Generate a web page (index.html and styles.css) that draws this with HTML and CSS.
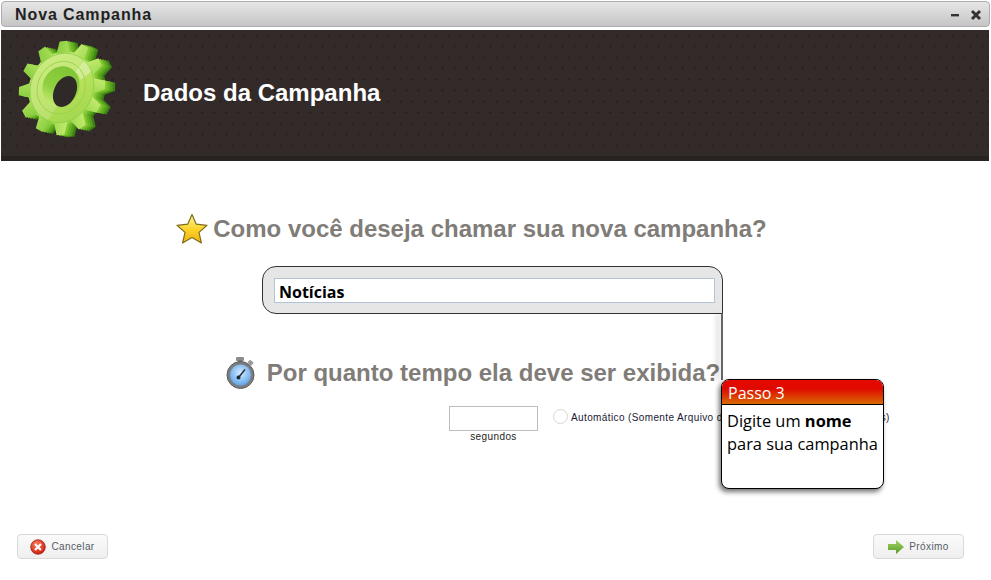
FILE: index.html
```html
<!DOCTYPE html>
<html lang="pt">
<head>
<meta charset="utf-8">
<title>Nova Campanha</title>
<link rel="stylesheet" href="styles.css">
</head>
<body>
<div class="window">
  <div class="titlebar">
    <span class="title">Nova Campanha</span>
    <div class="win-actions">
      <svg class="win-icon" width="12" height="12" viewBox="0 0 12 12"><rect x="2" y="5" width="8" height="2.4" fill="#333"/></svg>
      <svg class="win-icon" width="12" height="12" viewBox="0 0 12 12"><path d="M2 2 L10 10 M10 2 L2 10" stroke="#333" stroke-width="3"/></svg>
    </div>
  </div>
  <header class="banner">
    <svg class="gear" width="100" height="100" viewBox="0 0 100 100">
      <defs>
        <linearGradient id="gf" x1="0" y1="0" x2="1" y2="1">
          <stop offset="0" stop-color="#c4ea6c"/><stop offset=".55" stop-color="#b6e05a"/><stop offset="1" stop-color="#9ad44a"/>
        </linearGradient>
        <linearGradient id="gt" x1="0" y1="0" x2="1" y2="1">
          <stop offset="0" stop-color="#c6ec72"/><stop offset="1" stop-color="#86cc3c"/>
        </linearGradient>
        <linearGradient id="gh" x1="0" y1="0" x2="0" y2="1">
          <stop offset="0" stop-color="#7fc535"/><stop offset=".6" stop-color="#8fd040"/><stop offset="1" stop-color="#c2e96e"/>
        </linearGradient>
        <clipPath id="rim"><circle r="37"/></clipPath>
        <g id="tooth"><polygon points="-8,-36 -4.5,-50 4.5,-50 8,-36 8,36 4.5,50 -4.5,50 -8,36"/></g>
        <g id="cog">
          <circle r="39"/>
          <use href="#tooth" transform="rotate(4)"/>
          <use href="#tooth" transform="rotate(34)"/>
          <use href="#tooth" transform="rotate(64)"/>
          <use href="#tooth" transform="rotate(94)"/>
          <use href="#tooth" transform="rotate(124)"/>
          <use href="#tooth" transform="rotate(154)"/>
        </g>
      </defs>
      <g transform="translate(45 50)">
        <use href="#cog" fill="#3c8510" transform="translate(10 2) rotate(25) scale(.84 .96)"/>
        <use href="#cog" fill="#55a01c" transform="translate(7.5 1.5) rotate(25) scale(.84 .96)"/>
        <use href="#cog" fill="#6cb426" transform="translate(5 1) rotate(25) scale(.84 .96)"/>
        <use href="#cog" fill="#82c832" transform="translate(2.5 .5) rotate(25) scale(.84 .96)"/>
        <g transform="rotate(25) scale(.84 .96)">
          <use href="#cog" fill="url(#gt)"/>
          <circle r="37" fill="url(#gf)" stroke="#8fcf45" stroke-width=".9"/>
          <polygon points="14,-52 1,36 -45,36 -45,-52" fill="#fff" opacity=".16" clip-path="url(#rim)"/>
          <polygon points="12,-40 27,-34 16,-16 7,-22" fill="#fff" opacity=".35" clip-path="url(#rim)"/>
          <circle cx="-1" r="28" fill="none" stroke="#97d34c" stroke-width=".9"/>
          <circle cx="-2" cy="-1" r="21.5" fill="url(#gh)"/>
          <ellipse cx="5" cy="2" rx="13" ry="17" fill="#2f2927"/>
        </g>
      </g>
    </svg>
    <h1 class="banner-title">Dados da Campanha</h1>
  </header>
  <main class="content">
    <h2 class="question">
      <svg class="q-icon" width="34" height="34" viewBox="0 0 34 34">
        <defs><linearGradient id="st" x1="0" y1="0" x2="0" y2="1"><stop offset="0" stop-color="#fdf3a8"/><stop offset=".5" stop-color="#fbd52c"/><stop offset="1" stop-color="#f3b00c"/></linearGradient></defs>
        <polygon points="17,2.5 21.3,12.2 32,13.3 24,20.4 26.4,31 17,25.5 7.6,31 10,20.4 2,13.3 12.7,12.2" fill="url(#st)" stroke="#7d6d1c" stroke-width="1.2" stroke-linejoin="round"/>
      </svg>
      <span>Como você deseja chamar sua nova campanha?</span>
    </h2>
    <div class="name-box">
      <div class="name-input">Notícias</div>
      <span class="name-line"></span>
    </div>
    <h2 class="question question-time">
      <svg class="q-icon" width="32" height="34" viewBox="0 0 32 34">
        <defs><radialGradient id="wf" cx=".5" cy=".4" r=".6"><stop offset="0" stop-color="#d8ecff"/><stop offset="1" stop-color="#5ea6ea"/></radialGradient></defs>
        <rect x="11" y="1" width="8" height="4" rx="1" fill="#8d8d8d"/>
        <rect x="13" y="4" width="4" height="4" fill="#777"/>
        <rect x="23" y="5" width="5" height="4" rx="1" fill="#9a9a9a" transform="rotate(40 26 7)"/>
        <circle cx="15.5" cy="19" r="13.5" fill="#7b7d80" stroke="#5c5c5c" stroke-width="1"/>
        <circle cx="15.5" cy="19" r="10.5" fill="url(#wf)"/>
        <path d="M13.5 21.5 L20 13.5" stroke="#1d2a38" stroke-width="1.5"/>
        <circle cx="13.5" cy="21.5" r="2" fill="#1d2a38"/>
      </svg>
      <span>Por quanto tempo ela deve ser exibida?</span>
    </h2>
    <div class="duration">
      <div class="seconds">
        <div class="seconds-input"></div>
        <span class="seconds-label">segundos</span>
      </div>
      <div class="auto">
        <span class="radio"></span>
        <span class="auto-label">Automático (Somente Arquivo de Vídeo, Flash, Animações longas)</span>
      </div>
    </div>
    <aside class="tip">
      <div class="tip-head">Passo 3</div>
      <div class="tip-body">Digite um <b>nome</b><br>para sua campanha</div>
    </aside>
  </main>
  <footer class="actions">
    <button class="btn" type="button">
      <svg width="16" height="16" viewBox="0 0 16 16">
        <defs><radialGradient id="rb" cx=".4" cy=".3" r=".8"><stop offset="0" stop-color="#ff7a55"/><stop offset="1" stop-color="#c81408"/></radialGradient></defs>
        <circle cx="8" cy="8" r="7.3" fill="url(#rb)" stroke="#8e1a10" stroke-width=".7"/>
        <path d="M5 5 L11 11 M11 5 L5 11" stroke="#fff" stroke-width="2.2"/>
      </svg>
      <span>Cancelar</span>
    </button>
    <button class="btn btn-next" type="button">
      <svg width="16" height="14" viewBox="0 0 16 14">
        <defs><linearGradient id="ga" x1="0" y1="0" x2="0" y2="1"><stop offset="0" stop-color="#a4d468"/><stop offset="1" stop-color="#5b9a26"/></linearGradient></defs>
        <polygon points="0,4 8,4 8,0 16,7 8,14 8,10 0,10" fill="url(#ga)"/>
      </svg>
      <span>Próximo</span>
    </button>
  </footer>
</div>
</body>
</html>
```
FILE: styles.css
```css
* { box-sizing: border-box; }
html, body { margin: 0; height: 100%; background: #fff; overflow: hidden; }
.window {
  position: relative;
  display: flex;
  flex-direction: column;
  height: 580px;
  width: 991px;
  padding: 1px 1px 0 1px;
  font-family: "Liberation Sans", Arial, sans-serif;
}
.titlebar {
  display: flex;
  align-items: center;
  justify-content: space-between;
  height: 26px;
  padding: 2px 7px 0 13px;
  border: 1px solid #adadad;
  border-radius: 4px;
  background: linear-gradient(#e6e6e6, #c5c5c5);
}
.title {
  font-size: 16px;
  font-weight: bold;
  letter-spacing: .9px;
  color: #222;
}
.win-actions { display: flex; gap: 9px; }
.win-icon { display: block; }
.banner {
  display: flex;
  align-items: center;
  height: 131px;
  margin: 3px 1px 0 0;
  padding: 0 0 10px 16px;
  background-color: #332b2a;
  background-image: url("data:image/svg+xml,%3Csvg xmlns='http://www.w3.org/2000/svg' width='12' height='22'%3E%3Cpath fill='%23292221' d='M3 4h1v1h1v1h-1v1h-1v-1h-1v-1h1zM9 15h1v1h1v1h-1v1h-1v-1h-1v-1h1z'/%3E%3C/svg%3E");
  background-size: 12px 22px;
  border-bottom: 5px solid #282321;
}
.gear { display: block; flex: none; }
.banner-title {
  margin: 10px 0 0 26px;
  font-size: 24px;
  font-weight: bold;
  color: #fff;
}
.content {
  position: relative;
  flex: 1;
  display: flex;
  flex-direction: column;
  align-items: center;
  padding: 50px 49px 0 0;
}
.question {
  display: flex;
  align-items: center;
  gap: 4px;
  height: 36px;
  margin: 0;
  font-size: 24px;
  font-weight: bold;
  color: #807c78;
}
.q-icon { display: block; flex: none; }
.question-time { margin: 41px 0 0 3px; gap: 10px; }
.name-box {
  position: relative;
  width: 461px;
  height: 48px;
  margin: 19px 0 0 43px;
  padding: 11px 7px 0 11px;
  border: 1px solid #333;
  border-radius: 14px 14px 0 14px;
  background: #e6e6e6;
}
.name-input {
  height: 25px;
  padding-left: 4px;
  border: 1px solid #b3c3d6;
  background: #fff;
  font: bold 16px/26px "Open Sans", sans-serif;
  color: #000;
}
.name-line {
  position: absolute;
  right: -1px;
  top: 47px;
  width: 2px;
  height: 66px;
  background: #666;
  box-shadow: -4px 0 5px rgba(0, 0, 0, .25);
}
.duration {
  display: flex;
  gap: 15px;
  margin: 15px 0 0 448px;
  align-self: flex-start;
}
.seconds { display: flex; flex-direction: column; align-items: center; }
.seconds-input { width: 89px; height: 25px; border: 1px solid #bdbdbd; background: #fff; }
.seconds-label { font-size: 10px; line-height: 12px; letter-spacing: .4px; color: #222; }
.auto { display: flex; align-items: flex-start; gap: 3px; padding-top: 3px; }
.radio { width: 15px; height: 15px; border: 1px solid #d8d8d8; border-radius: 50%; }
.auto-label { font-size: 10px; line-height: 18px; letter-spacing: .38px; white-space: nowrap; color: #1a1a33; }
.tip {
  position: absolute;
  left: 720px;
  top: 218px;
  width: 163px;
  height: 110px;
  border: 1px solid #000;
  border-radius: 8px;
  background: #fff;
  box-shadow: -2px 3px 5px rgba(0, 0, 0, .55);
  font-family: "Open Sans", sans-serif;
  overflow: hidden;
}
.tip-head {
  height: 25px;
  padding-left: 6px;
  border-bottom: 1px solid #000;
  background: linear-gradient(#e60a00, #e00800 35%, #d86a00);
  color: #fff;
  font-size: 16px;
  line-height: 27px;
}
.tip-body {
  padding: 4px 0 0 5px;
  font-size: 16.4px;
  line-height: 23px;
  color: #000;
}
.actions {
  display: flex;
  justify-content: space-between;
  padding: 0 26px 21px 16px;
}
.btn {
  display: flex;
  align-items: center;
  justify-content: center;
  gap: 5px;
  width: 91px;
  height: 25px;
  padding: 0;
  border: 1px solid #d9d9d9;
  border-radius: 4px;
  background: linear-gradient(#fafafa, #efefef);
  font: 10px "Liberation Sans", Arial, sans-serif;
  letter-spacing: .4px;
  color: #555b66;
}
```
